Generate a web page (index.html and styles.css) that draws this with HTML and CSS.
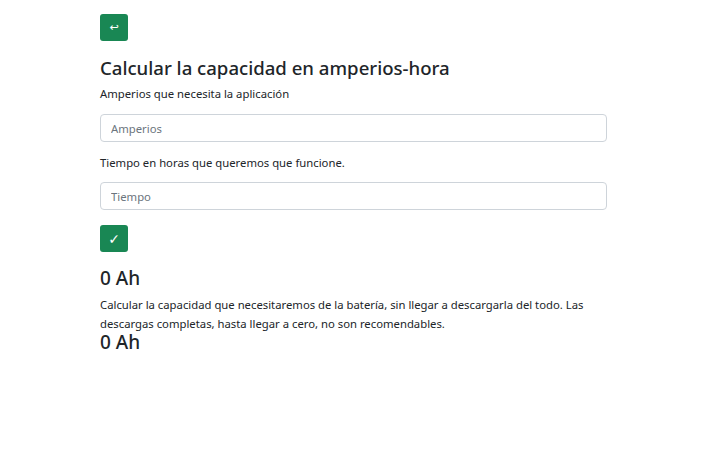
FILE: index.html
```html
<!DOCTYPE html>
<html lang="es">
<head>
<meta charset="utf-8">
<link rel="stylesheet" href="styles.css">
</head>
<body>
<main class="container">
  <button class="btn btn-back" type="button">↩</button>
  <h1 class="title">Calcular la capacidad en amperios-hora</h1>
  <p class="label">Amperios que necesita la aplicación</p>
  <input class="field" type="text" placeholder="Amperios">
  <p class="label label-gap">Tiempo en horas que queremos que funcione.</p>
  <input class="field" type="text" placeholder="Tiempo">
  <button class="btn btn-check" type="button">✓</button>
  <h2 class="result">0 Ah</h2>
  <p class="desc">Calcular la capacidad que necesitaremos de la batería, sin llegar a descargarla del todo. Las descargas completas, hasta llegar a cero, no son recomendables.</p>
  <h2 class="result result-last">0 Ah</h2>
</main>
</body>
</html>
```
FILE: styles.css
```css
* { box-sizing: border-box; }
html, body { margin: 0; padding: 0; background: #fff; }
body {
  font-family: "Noto Sans", "Open Sans", sans-serif;
  color: #212529;
  font-size: 11.3px;
}
.container {
  width: 507px;
  margin-left: 100px;
  padding-top: 14px;
  display: flex;
  flex-direction: column;
  align-items: flex-start;
}
.btn {
  width: 28px;
  height: 27px;
  border: none;
  border-radius: 3px;
  background: #198754;
  color: #fff;
  font-family: "DejaVu Sans", sans-serif;
  padding: 0;
  display: flex;
  align-items: center;
  justify-content: center;
}
.btn-back { font-size: 11px; }
.btn-check { font-size: 14px; margin-top: 15px; }
.title {
  font-size: 18.6px;
  font-weight: 500;
  margin: 14px 0 0;
  line-height: 26px;
}
.label {
  margin: 4px 0 0;
  line-height: 18px;
}
.label-gap { margin-top: 12px; }
.field {
  width: 100%;
  height: 28px;
  margin-top: 11px;
  border: 1px solid #ced4da;
  border-radius: 4px;
  padding: 0 10px;
  font-family: inherit;
  font-size: 11.3px;
  color: #212529;
}
.label-gap + .field { margin-top: 10px; }
.field::placeholder { color: #6c757d; }
.result {
  font-size: 19px;
  font-weight: 500;
  line-height: 24px;
  margin: 14px 0 0;
}
.desc {
  margin: 5px 0 0;
  line-height: 19px;
}
.result-last { margin-top: -3px; }
```
